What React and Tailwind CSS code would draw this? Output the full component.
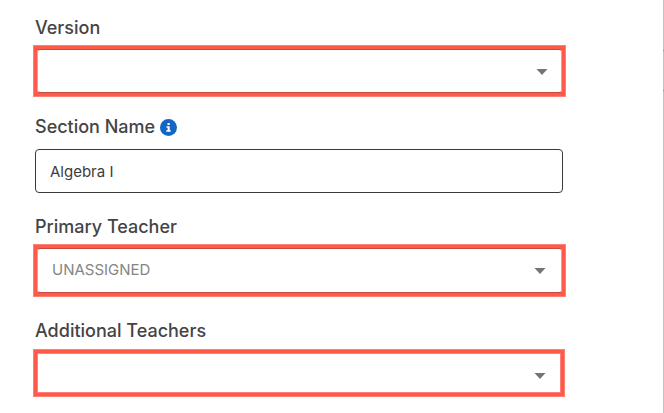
import React, { useState } from 'react';

const Label = ({ htmlFor, children }) => (
    <label htmlFor={htmlFor} className="text-lg leading-6 font-medium text-[#444446]">
        {children}
    </label>
);

// Select with a highlighted frame and its own arrow
const SelectField = ({ id, label, options, frameClass, selectClass, arrowClass }) => (
    <div>
        <div className="flex pl-0.5">
            <Label htmlFor={id}>{label}</Label>
        </div>
        <div className={`relative border border-[#ff8075] bg-[#ff594a] p-[3px] ${frameClass}`}>
            <select
                id={id}
                className={`block w-full appearance-none border bg-white pl-3.5 pr-10 text-[15px] text-[#858585] focus:outline-none ${selectClass}`}
            >
                {options.map((option) => (
                    <option key={option}>{option}</option>
                ))}
            </select>
            <svg
                viewBox="0 0 12 6"
                className={`pointer-events-none absolute top-[23px] h-1.5 w-3 ${arrowClass}`}
                aria-hidden="true"
            >
                <path d="M0.5 0h11L6 6z" fill="#757575" />
            </svg>
        </div>
    </div>
);

const InfoIcon = () => (
    <svg viewBox="0 0 17 17" className="h-[17px] w-[17px]" aria-hidden="true">
        <circle cx="8.5" cy="8.5" r="8.5" fill="#1565c5" />
        <path d="M7.5 4h2.2v2H7.5zM6.5 7.2h3.2v4h1v1.5H6.3v-1.5h1.3V8.7H6.5z" fill="#fff" />
    </svg>
);

const App = () => {
    const [sectionName, setSectionName] = useState('Algebra I');

    return (
        <div className="flex min-h-screen bg-white font-['Inter',sans-serif]">
            <form className="min-w-0 flex-1 pt-4 pr-[97px] pb-4 pl-[33px]">
                <SelectField
                    id="version"
                    label="Version"
                    options={['']}
                    frameClass="mt-[5px]"
                    selectClass="h-11 rounded-[3px] border-x-[#ff9a91] border-y-[#c24a40]"
                    arrowClass="right-[17px]"
                />

                <div className="mt-[18px] pr-[3px] pl-0.5">
                    <div className="flex items-center gap-[5px]">
                        <Label htmlFor="section-name">Section Name</Label>
                        <button type="button" aria-label="About section name">
                            <InfoIcon />
                        </button>
                    </div>
                    <input
                        id="section-name"
                        type="text"
                        value={sectionName}
                        onChange={(e) => setSectionName(e.target.value)}
                        className="mt-2.5 block h-11 w-full rounded border border-[#3a3a3c] px-3.5 text-[15px] text-[#3c3c3e] focus:outline-none"
                    />
                </div>

                <div className="mt-[22px]">
                    <SelectField
                        id="primary-teacher"
                        label="Primary Teacher"
                        options={['UNASSIGNED']}
                        frameClass="mt-[5px]"
                        selectClass="h-[45px] rounded-[3px] border-x-[#ff9a91] border-y-[#c24a40]"
                        arrowClass="right-[19px]"
                    />
                </div>

                <div className="mt-[22px]">
                    <SelectField
                        id="additional-teachers"
                        label="Additional Teachers"
                        options={['']}
                        frameClass="mt-1.5 mr-px"
                        selectClass="h-10 border-[#ff8075]"
                        arrowClass="right-[18px]"
                    />
                </div>
            </form>

            {/* Edge of the next panel */}
            <div className="flex w-px flex-col bg-[#c2c2c2]">
                <div className="mt-[50px] h-[41px] border-y border-[#8c8c8c]" />
            </div>
        </div>
    );
};

export default App;
